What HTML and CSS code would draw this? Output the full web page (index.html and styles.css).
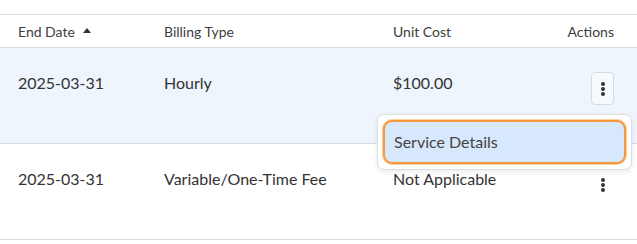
FILE: index.html
```html
<!DOCTYPE html>
<html>
<head>
<meta charset="utf-8">
<link rel="stylesheet" href="styles.css">
</head>
<body>
<div class="table">
  <div class="row head">
    <div class="cell">End Date <span class="sort"></span></div>
    <div class="cell">Billing Type</div>
    <div class="cell">Unit Cost</div>
    <div class="cell actions">Actions</div>
  </div>
  <div class="row body selected">
    <div class="cell">2025-03-31</div>
    <div class="cell">Hourly</div>
    <div class="cell">$100.00</div>
    <div class="cell actions">
      <button class="kebab open" aria-label="More actions">
        <svg width="4" height="14" viewBox="0 0 4 14"><circle cx="2" cy="2" r="2"/><circle cx="2" cy="7" r="2"/><circle cx="2" cy="12" r="2"/></svg>
      </button>
      <div class="menu">
        <div class="menu-item">Service Details</div>
      </div>
    </div>
  </div>
  <div class="row body">
    <div class="cell">2025-03-31</div>
    <div class="cell">Variable/One-Time Fee</div>
    <div class="cell">Not Applicable</div>
    <div class="cell actions">
      <button class="kebab" aria-label="More actions">
        <svg width="4" height="14" viewBox="0 0 4 14"><circle cx="2" cy="2" r="2"/><circle cx="2" cy="7" r="2"/><circle cx="2" cy="12" r="2"/></svg>
      </button>
    </div>
  </div>
</div>
</body>
</html>
```

FILE: styles.css
```css
html, body {
  margin: 0;
  padding: 0;
  background: #fff;
}
body {
  font-family: Lato, "Open Sans", sans-serif;
  color: #333;
  padding-top: 14px;
}
.table {
  border-top: 1px solid #dcdcdc;
}
.row {
  display: grid;
  grid-template-columns: 146px 229px 1fr 80px;
  border-bottom: 1px solid #dcdcdc;
}
.cell {
  padding-left: 18px;
}
.head {
  height: 32px;
  align-items: center;
  font-size: 14px;
  color: #3d3d3d;
}
.head .cell {
  display: flex;
  align-items: center;
}
.sort {
  display: inline-block;
  width: 0;
  height: 0;
  margin-left: 8px;
  border-left: 4px solid transparent;
  border-right: 4px solid transparent;
  border-bottom: 5px solid #333;
  position: relative;
  top: -1px;
}
.head .actions {
  justify-content: flex-end;
  padding-right: 23px;
}
.body {
  height: 95px;
  font-size: 16px;
  align-items: start;
}
.body .cell {
  padding-top: 25px;
  line-height: 20px;
}
.selected {
  background: #eef5fd;
}
.body .actions {
  position: relative;
  padding-top: 24px;
  padding-right: 23px;
  display: flex;
  justify-content: flex-end;
}
.kebab {
  width: 23px;
  height: 33px;
  padding: 0;
  border: 1px solid transparent;
  border-radius: 4px;
  background: transparent;
  display: flex;
  align-items: center;
  justify-content: center;
  fill: #333;
}
.kebab.open {
  border-color: #d5dbe3;
  background: #f6f9fd;
}
.menu {
  position: absolute;
  top: 66px;
  right: 5px;
  width: 255px;
  height: 56px;
  background: #fff;
  border: 1px solid #dedede;
  border-radius: 7px;
  box-shadow: 0 2px 6px rgba(0,0,0,0.08);
  padding: 5px;
  box-sizing: border-box;
  z-index: 2;
}
.menu-item {
  height: 100%;
  box-sizing: border-box;
  background: #d7e7fc;
  border: 2px solid #f59a3c;
  box-shadow: 0 0 0 1px #fbd0a4;
  border-radius: 9px;
  display: flex;
  align-items: center;
  padding-left: 9px;
  font-size: 16px;
  color: #444;
}
```
